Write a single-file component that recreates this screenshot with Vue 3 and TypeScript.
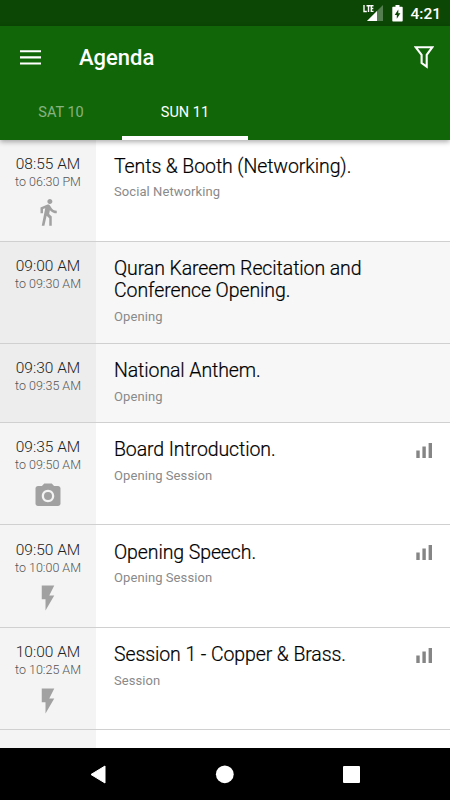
<script setup lang="ts">
interface Session {
  start: string
  end: string
  title: string
  track: string
  icon?: 'walk' | 'camera' | 'flash'
  poll?: boolean
  muted?: boolean
  size: 'tall' | 'short'
}

const icons: Record<string, string> = {
  walk: 'M13.5 5.5c1.1 0 2-.9 2-2s-.9-2-2-2-2 .9-2 2 .9 2 2 2zM9.8 8.9L7 23h2.1l1.8-8 2.1 2v6h2v-7.5l-2.1-2 .6-3C14.8 12 16.8 13 19 13v-2c-1.9 0-3.5-1-4.3-2.4l-1-1.6c-.4-.6-1-1-1.7-1-.3 0-.5.1-.8.1L6 8.3V13h2V9.6l1.8-.7',
  camera: 'M9 2L7.17 4H4c-1.1 0-2 .9-2 2v12c0 1.1.9 2 2 2h16c1.1 0 2-.9 2-2V6c0-1.1-.9-2-2-2h-3.17L15 2H9zm3 15c-2.76 0-5-2.24-5-5s2.24-5 5-5 5 2.24 5 5-2.24 5-5 5zM12 8.8a3.2 3.2 0 1 0 0 6.4a3.2 3.2 0 1 0 0-6.4z',
  flash: 'M7 2v11h3v9l7-12h-4l4-8z',
}

const sessions: Session[] = [
  { start: '08:55 AM', end: '06:30 PM', title: 'Tents & Booth (Networking).', track: 'Social Networking', icon: 'walk', size: 'tall' },
  { start: '09:00 AM', end: '09:30 AM', title: 'Quran Kareem Recitation and Conference Opening.', track: 'Opening', muted: true, size: 'tall' },
  { start: '09:30 AM', end: '09:35 AM', title: 'National Anthem.', track: 'Opening', muted: true, size: 'short' },
  { start: '09:35 AM', end: '09:50 AM', title: 'Board Introduction.', track: 'Opening Session', icon: 'camera', poll: true, size: 'tall' },
  { start: '09:50 AM', end: '10:00 AM', title: 'Opening Speech.', track: 'Opening Session', icon: 'flash', poll: true, size: 'tall' },
  { start: '10:00 AM', end: '10:25 AM', title: 'Session 1 - Copper & Brass.', track: 'Session', icon: 'flash', poll: true, size: 'tall' },
]
</script>

<template>
  <div class="screen">
    <div class="status">
      <svg class="signal" width="22" height="18" viewBox="0 0 22 18">
        <path d="M20 1v16H4z" fill="#fff" fill-opacity=".3" />
        <path d="M14 7v10H4z" fill="#fff" />
        <path d="M1 1v6.500h2.800M3.500 1.700h4M5.500 1.700V8M10.500 1.700H8.300v5.700h2.200M8.300 4.500h2" fill="none" stroke="#fff" stroke-width="1.400" />
      </svg>
      <svg class="battery" width="11" height="17" viewBox="0 0 11 17">
        <path d="M3.500 0h4v1.700H10q.7 0 .7.700v13.400q0 .700-.7.700H1q-.7 0-.7-.7V2.400q0-.7.700-.7h2.500z" fill="#fff" />
        <path d="M6.300 4.500L2.700 10h2.100v3.700L8.400 8.300H6.300z" fill="#0c4705" />
      </svg>
      <span class="clock">4:21</span>
    </div>
    <header class="header">
      <div class="toolbar">
        <svg class="menu" width="21" height="15" viewBox="0 0 21 15">
          <path d="M0 1.300h21M0 7.400h21M0 13.500h21" stroke="#fff" stroke-width="2.100" />
        </svg>
        <h1>Agenda</h1>
        <svg class="filter" width="20" height="23" viewBox="0 0 20 23">
          <path d="M1.600 1.200h16.800L12.700 8.800v11.900L7.600 17V8.800z" fill="none" stroke="#fff" stroke-width="2.100" />
        </svg>
      </div>
      <nav class="tabs">
        <span class="tab">SAT 10</span>
        <span class="tab active">SUN 11</span>
      </nav>
    </header>
    <main class="list">
      <article v-for="s in sessions" :key="s.start" class="row" :class="[s.size, { muted: s.muted }]">
        <div class="time">
          <span class="start">{{ s.start }}</span>
          <span class="end">to {{ s.end }}</span>
          <svg v-if="s.icon" class="kind" width="30" height="30" viewBox="0 0 24 24">
            <path :d="icons[s.icon]" fill="#a1a1a1" fill-rule="evenodd" />
          </svg>
        </div>
        <div class="info">
          <h2>{{ s.title }}</h2>
          <p>{{ s.track }}</p>
        </div>
        <svg v-if="s.poll" class="poll" width="17" height="15" viewBox="0 0 17 15">
          <path d="M.300 7.500h3.400V15H.300zM6.400 3.500h3.400V15H6.400zM12.600 0H16v15h-3.400z" fill="#858585" />
        </svg>
      </article>
      <div class="row next"><div class="time"></div></div>
    </main>
    <footer class="navbar">
      <svg width="17" height="19" viewBox="0 0 17 19"><path d="M16 1v17L2 9.500z" fill="#fff" stroke="#fff" stroke-linejoin="round" /></svg>
      <svg width="19" height="19" viewBox="0 0 19 19"><circle cx="9.800" cy="9.300" r="8.900" fill="#fff" /></svg>
      <svg width="17" height="17" viewBox="0 0 17 17"><rect width="17" height="17" rx="1" fill="#fff" /></svg>
    </footer>
  </div>
</template>

<style>
body { margin: 0; overflow: hidden; }
</style>

<style scoped>
.screen { width: 450px; height: 800px; display: flex; flex-direction: column; overflow: hidden; background: #fff; font-family: Roboto, "Liberation Sans", sans-serif; }
.status { height: 26px; flex: none; box-sizing: border-box; background: #0c4705; display: flex; align-items: center; justify-content: flex-end; padding-right: 9px; color: #fff; }
.battery { margin: 0 7px; }
.clock { font-size: 15.500px; font-weight: 500; line-height: 24px; padding-top: 2px; }
.header { height: 114px; flex: none; background: #116707; box-shadow: 0 2px 5px rgba(0, 0, 0, .32); z-index: 1; display: flex; flex-direction: column; color: #fff; }
.toolbar { height: 64px; box-sizing: border-box; display: flex; align-items: center; padding: 0 16px 0 20px; }
.toolbar h1 { margin: 0 0 0 38px; flex: 1; font-size: 22px; font-weight: 500; line-height: 26px; }
.tabs { flex: 1; display: flex; }
.tab { width: 122px; box-sizing: border-box; text-align: center; font-size: 14.500px; line-height: 47px; color: rgba(255, 255, 255, .5); border-bottom: 4px solid transparent; }
.tab.active { width: 126px; color: #fff; border-color: #fff; }
.list { flex: 1; min-height: 0; overflow: hidden; display: flex; flex-direction: column; margin-top: -.600px; }
.row { flex: none; display: flex; box-sizing: border-box; border-bottom: 1px solid #d0d0d0; background: #fff; }
.tall { height: 102.400px; }
.short { height: 78.800px; }
.time { width: 96px; flex: none; box-sizing: border-box; padding-top: 14.300px; background: #f4f4f4; display: flex; flex-direction: column; align-items: center; }
.muted { background: #f7f7f7; }
.muted .time { background: #ededed; }
.start { font-size: 15.500px; line-height: 20px; font-weight: 300; color: #222; }
.end { font-size: 12.500px; line-height: 16px; font-weight: 300; color: #555; }
.kind { margin-top: 7.500px; }
.info { flex: 1; padding: 16.200px 0 0 18px; }
.info h2 { margin: 0; width: 270px; font-size: 19.500px; line-height: 22.300px; font-weight: 300; letter-spacing: -.1px; color: #000; -webkit-text-stroke: .2px #000; }
.info p { margin: 6.300px 0 0; font-size: 13px; line-height: 16px; font-weight: 400; letter-spacing: .08px; color: #8a8a8a; }
.poll { margin: 20px 17px 0 0; }
.next { height: 30px; border: 0; }
.navbar { height: 52px; flex: none; background: #000; z-index: 1; display: flex; align-items: center; justify-content: space-between; padding: 0 90px 0 89px; }
</style>
